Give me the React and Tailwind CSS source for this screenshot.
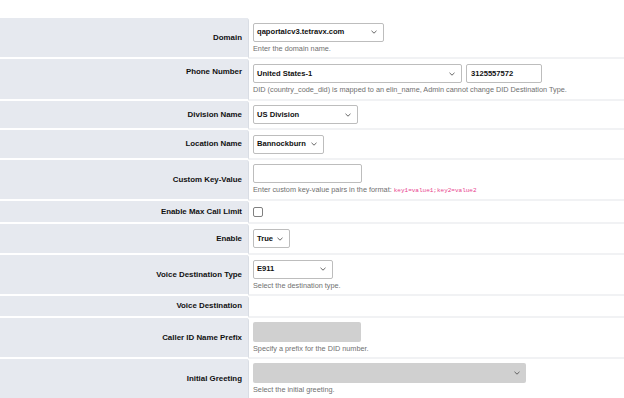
import React from 'react';

const Chevron = () => (
  <svg width="6" height="4" viewBox="0 0 6 4" className="shrink-0">
    <path d="M0.5 0.8 L3 3.2 L5.5 0.8" fill="none" stroke="#555" strokeWidth="0.9" />
  </svg>
);

const Select = ({ value, width, disabled }) => (
  <div
    className={`flex h-[19px] items-center justify-between rounded-[2px] border px-[3px] ${
      disabled ? 'border-[#d0d0d0] bg-[#d0d0d0]' : 'border-[#bdbdbd] bg-white'
    } ${width}`}
  >
    <span className="text-[7.6px] font-bold text-[#111]">{value}</span>
    <span className="pr-[3px]">
      <Chevron />
    </span>
  </div>
);

const Help = ({ children }) => (
  <div className="mt-[3px] whitespace-nowrap text-[7.3px] leading-[8px] text-[#707070]">{children}</div>
);

const Row = ({ label, height, top, children }) => (
  <div className={`flex ${height}`}>
    <div
      className={`flex w-[249px] shrink-0 justify-end rounded-tr-[3px] border-b-2 border-r border-b-white border-r-[#d9dde4] bg-[#e6e9ef] pr-[6px] ${
        top ? 'items-start pt-[7px]' : 'items-center'
      }`}
    >
      <span className="text-[7.9px] font-bold text-[#111]">{label}</span>
    </div>
    <div className="flex flex-1 flex-col justify-center border-b-2 border-[#f1f2f4] pl-[4px]">
      {children}
    </div>
  </div>
);

export default function App() {
  return (
    <div className="h-[398px] w-[624px] overflow-hidden bg-white" style={{ fontFamily: '"Liberation Sans", Arial, sans-serif' }}>
      <div className="h-[18px]" />
      <Row label="Domain" height="h-[41px]">
        <Select value="qaportalcv3.tetravx.com" width="w-[131px]" />
        <Help>Enter the domain name.</Help>
      </Row>
      <Row label="Phone Number" height="h-[42px]" top>
        <div className="flex gap-[4px]">
          <Select value="United States-1" width="w-[209px]" />
          <div className="flex h-[19px] w-[76px] items-center rounded-[2px] border border-[#bdbdbd] px-[4px] text-[7.6px] font-bold text-[#111]">
            3125557572
          </div>
        </div>
        <Help>DID (country_code_did) is mapped to an elin_name, Admin cannot change DID Destination Type.</Help>
      </Row>
      <Row label="Division Name" height="h-[29px]">
        <Select value="US Division" width="w-[105px]" />
      </Row>
      <Row label="Location Name" height="h-[30px]">
        <Select value="Bannockburn" width="w-[71px]" />
      </Row>
      <Row label="Custom Key-Value" height="h-[41px]">
        <div className="h-[19px] w-[109px] rounded-[2px] border border-[#bdbdbd]" />
        <Help>
          Enter custom key-value pairs in the format:{' '}
          <span className="text-[6px] text-[#e83e8c]" style={{ fontFamily: '"Liberation Mono", monospace' }}>
            key1=value1;key2=value2
          </span>
        </Help>
      </Row>
      <Row label="Enable Max Call Limit" height="h-[23px]">
        <div className="h-[10px] w-[10px] rounded-[2px] border border-[#808080] bg-white" />
      </Row>
      <Row label="Enable" height="h-[31px]">
        <Select value="True" width="w-[37px]" />
      </Row>
      <Row label="Voice Destination Type" height="h-[41px]">
        <Select value="E911" width="w-[80px]" />
        <Help>Select the destination type.</Help>
      </Row>
      <Row label="Voice Destination" height="h-[22px]" />
      <Row label="Caller ID Name Prefix" height="h-[41px]">
        <div className="h-[20px] w-[108px] rounded-[2px] bg-[#d0d0d0]" />
        <Help>Specify a prefix for the DID number.</Help>
      </Row>
      <Row label="Initial Greeting" height="h-[41px]">
        <div className="flex h-[20px] w-[273px] items-center justify-end rounded-[2px] bg-[#d0d0d0] pr-[6px]">
          <Chevron />
        </div>
        <Help>Select the initial greeting.</Help>
      </Row>
    </div>
  );
}
